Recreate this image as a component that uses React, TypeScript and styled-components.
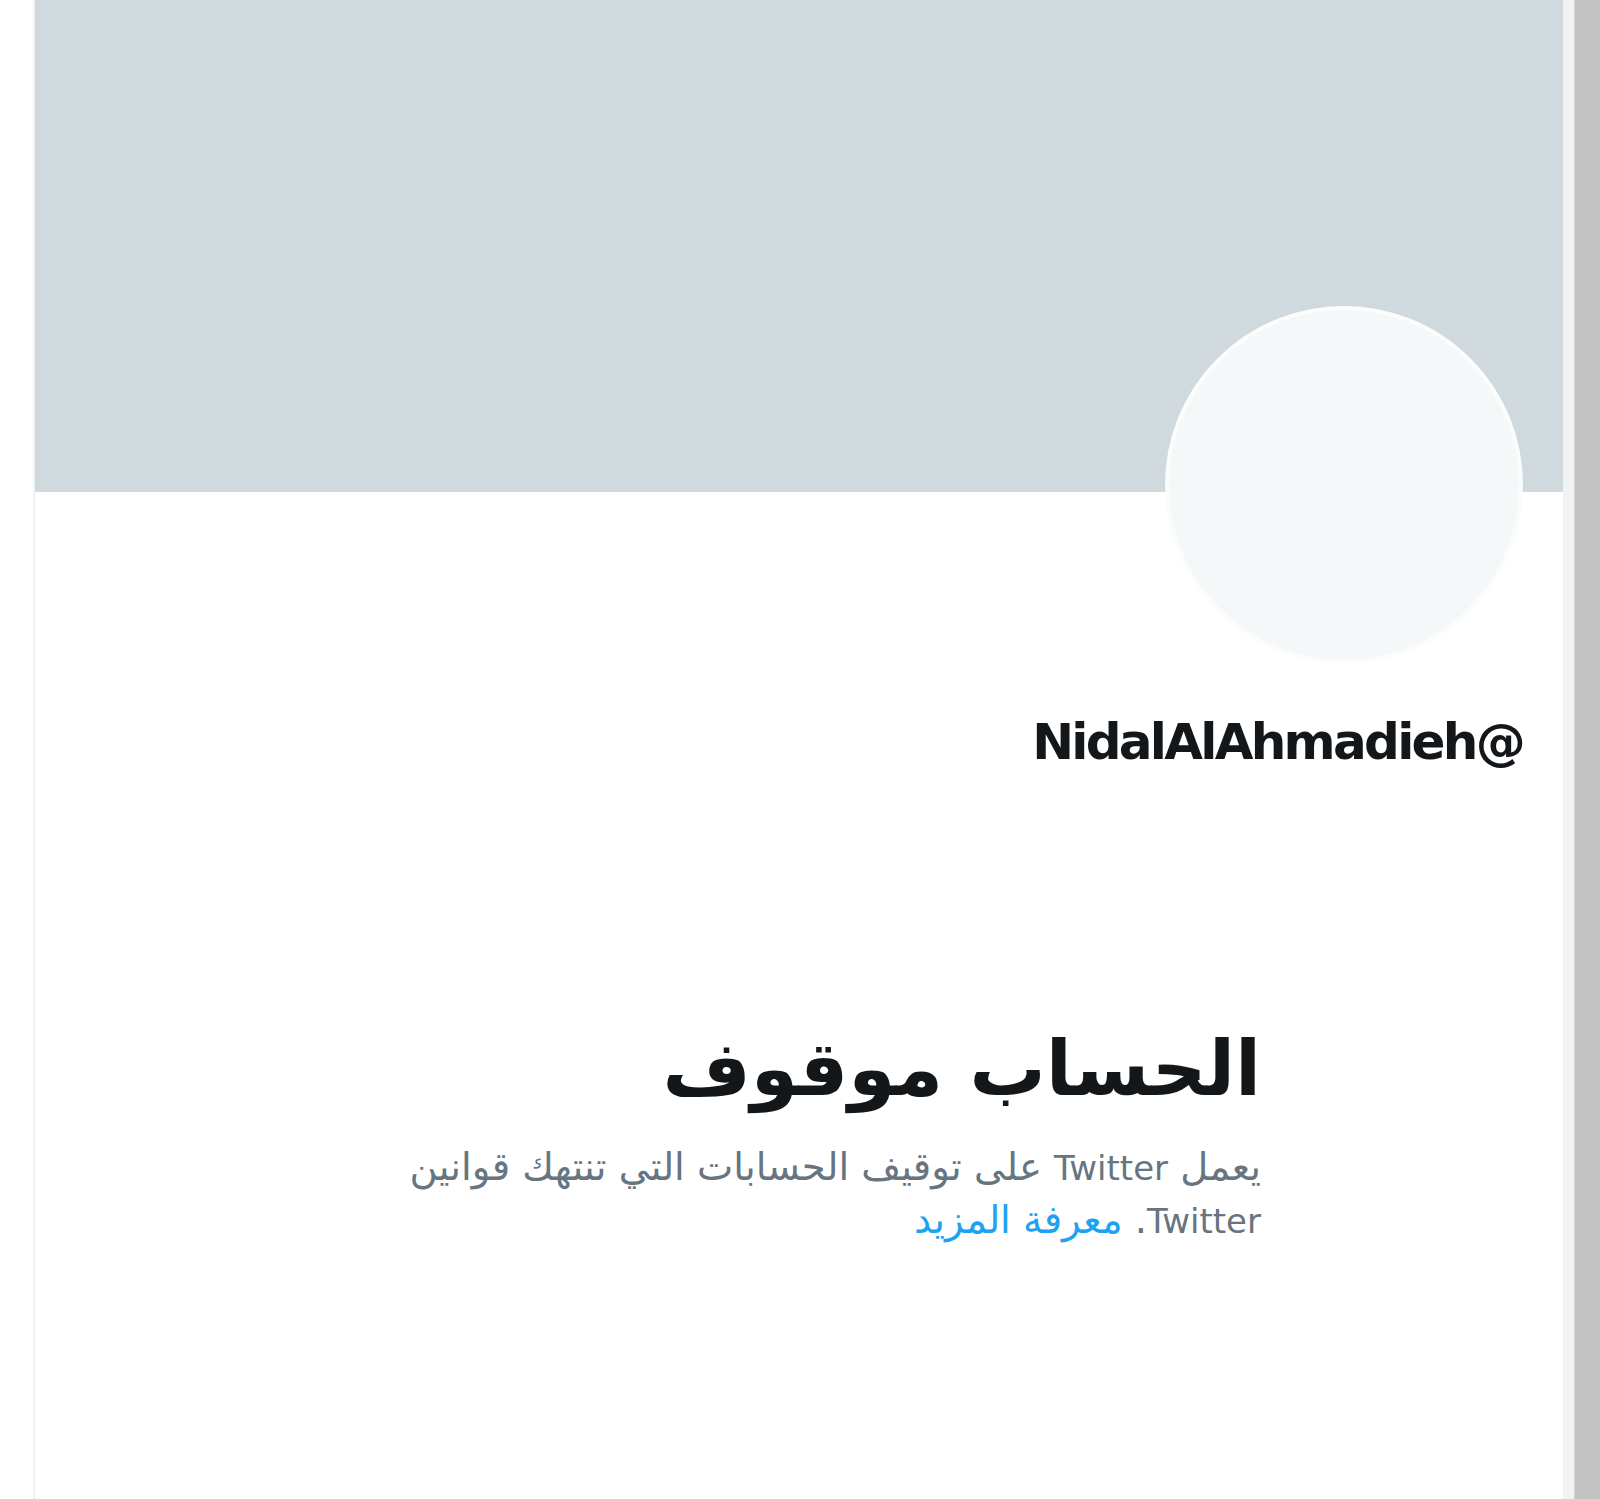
import React from 'react'
import styled, { createGlobalStyle } from 'styled-components'

const GlobalStyle = createGlobalStyle`
  html, body {
    margin: 0;
    padding: 0;
    background: #fff;
  }
  body {
    font-family: "DejaVu Sans", "Noto Sans", sans-serif;
    color: #14171a;
  }
`

const Page = styled.div`
  display: flex;
  width: 1600px;
  min-height: 1499px;
  background: #fff;
`

const Gutter = styled.div`
  width: 33px;
  flex: none;
`

const Column = styled.main`
  flex: 1;
  display: flex;
  flex-direction: column;
  border-left: 2px solid #eef2f4;
  direction: rtl;
`

const EdgeStrip = styled.div`
  width: 11px;
  flex: none;
  background: #f1f2f2;
  border-right: 1px solid #d6d6d6;
`

const ScrollTrack = styled.div`
  width: 25px;
  flex: none;
  background: #c2c2c2;
`

const Banner = styled.div`
  height: 492px;
  background: #cfd9de;
`

const ProfileHead = styled.section`
  display: flex;
  flex-direction: column;
  align-items: flex-start;
  padding: 0 40px;
`

const Avatar = styled.div`
  width: 350px;
  height: 350px;
  margin-top: -186px;
  border-radius: 50%;
  border: 4px solid #fbfcfc;
  background: #f5f8f8;
`

const Handle = styled.h2`
  margin: 45px 0 0;
  font-family: "DejaVu Sans", sans-serif;
  font-size: 50px;
  font-weight: 700;
  letter-spacing: -2.7px;
  line-height: 66px;
  color: #14171a;
`

const EmptyState = styled.section`
  width: 924px;
  margin: 242px auto 0;
  text-align: right;
`

const Title = styled.h1`
  margin: 0;
  font-family: "DejaVu Sans", sans-serif;
  font-size: 76px;
  font-weight: 700;
  line-height: 104px;
  color: #14171a;
`

const Body = styled.p`
  margin: 20px 0 0;
  font-family: "DejaVu Sans", sans-serif;
  font-size: 38.5px;
  line-height: 51px;
  color: #66757f;
`

const Latin = styled.span`
  font-size: 34px;
`

const Link = styled.a`
  color: #1da1f2;
  text-decoration: none;
`

export default function App() {
  return (
    <>
      <GlobalStyle />
      <Page>
        <Gutter />
        <Column>
          <Banner />
          <ProfileHead>
            <Avatar />
            <Handle>@NidalAlAhmadieh</Handle>
          </ProfileHead>
          <EmptyState>
            <Title>الحساب موقوف</Title>
            <Body>
              يعمل <Latin>Twitter</Latin> على توقيف الحسابات التي تنتهك قوانين{' '}
              <Latin>Twitter</Latin>.{' '}
              <Link href="#">معرفة المزيد</Link>
            </Body>
          </EmptyState>
        </Column>
        <EdgeStrip />
        <ScrollTrack />
      </Page>
    </>
  )
}
